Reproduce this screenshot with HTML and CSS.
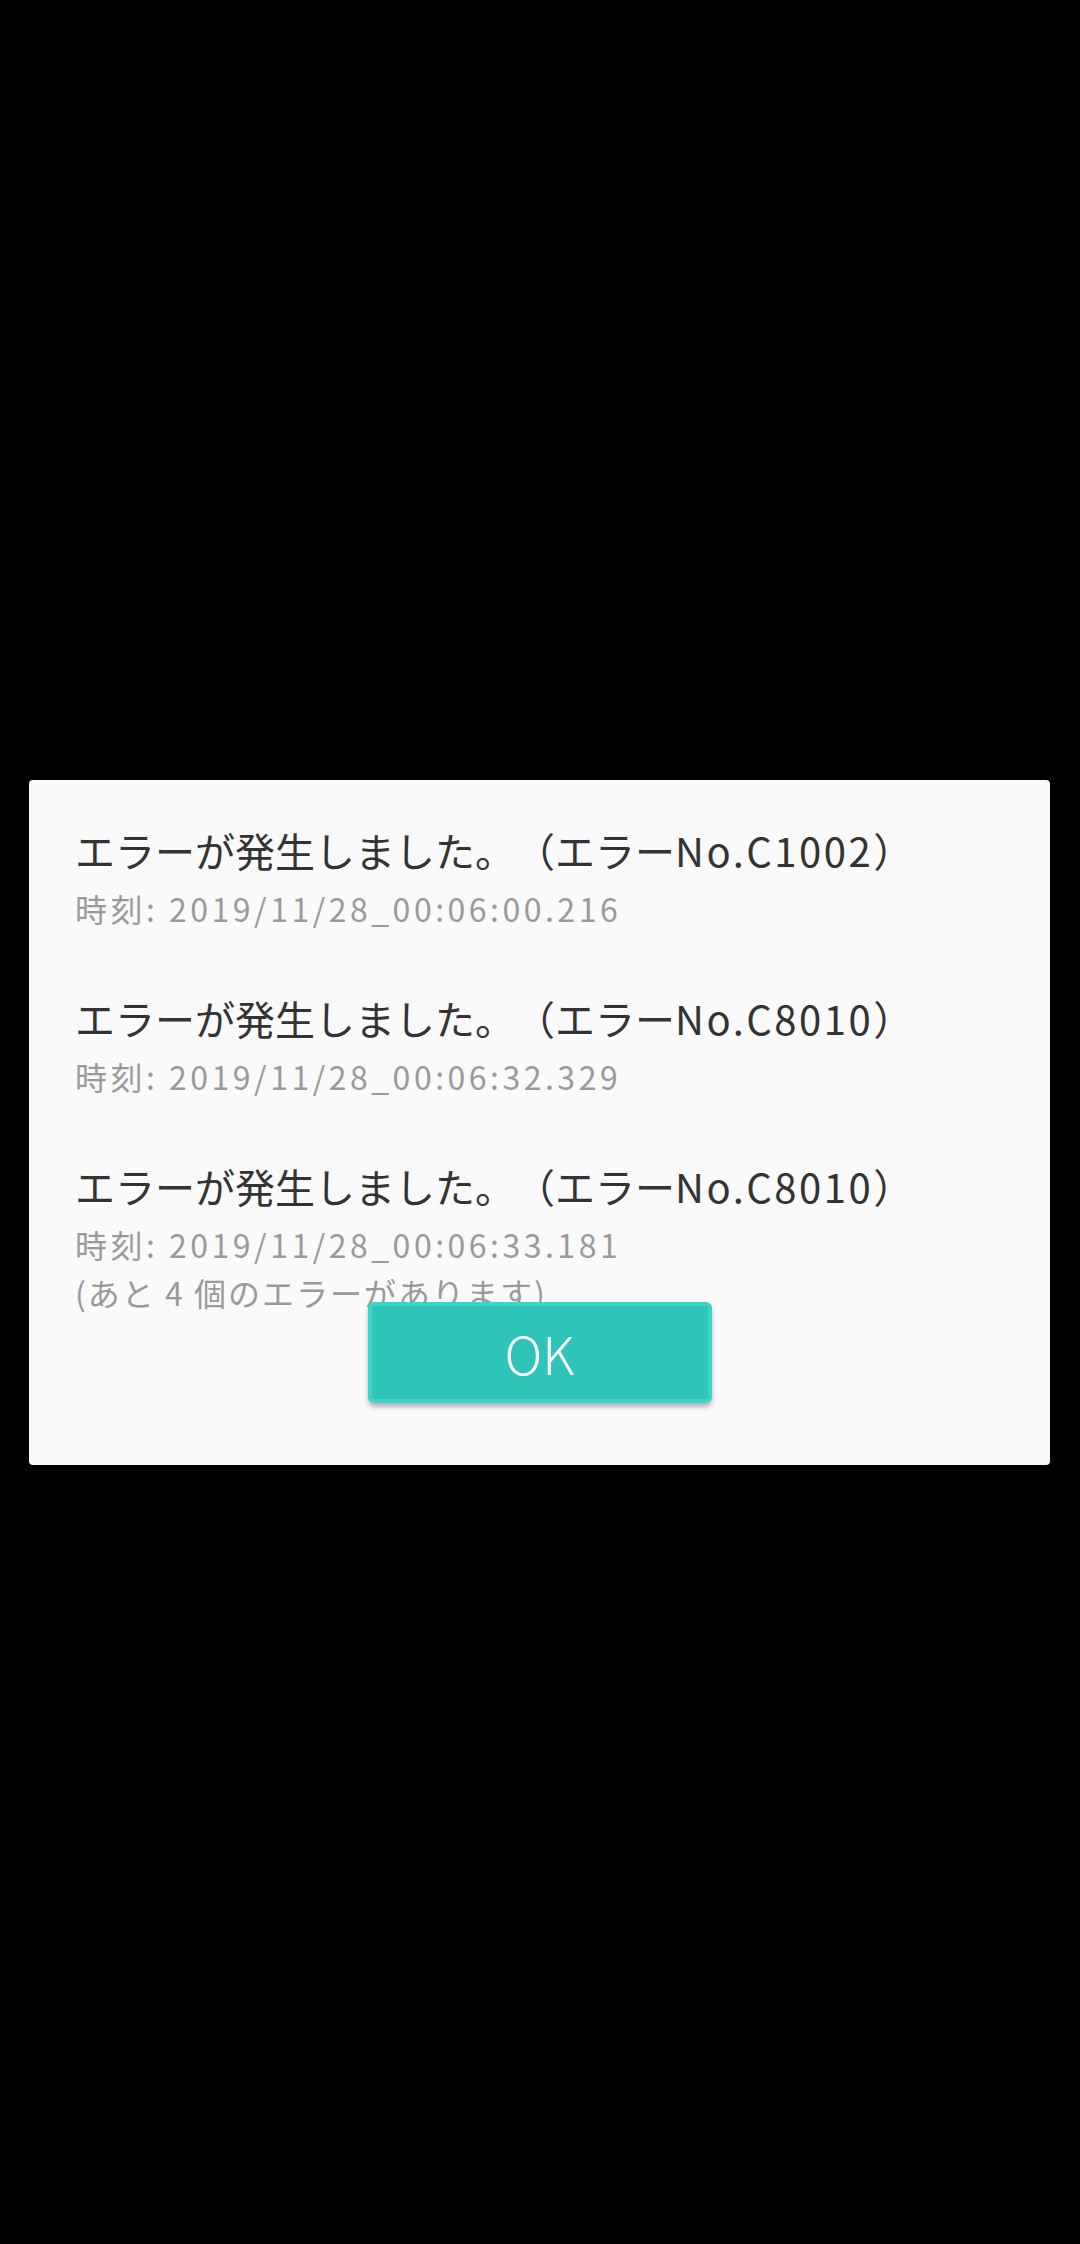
FILE: index.html
```html
<!DOCTYPE html>
<html lang="ja">
<head>
<meta charset="utf-8">
<link rel="stylesheet" href="styles.css">
</head>
<body>
<div class="screen">
  <div class="dialog">
    <div class="entry">
      <div class="title">エラーが発生しました。（エラー<span class="code">No.C1002</span>）</div>
      <div class="time">時刻: 2019/11/28_00:06:00.216</div>
    </div>
    <div class="entry">
      <div class="title">エラーが発生しました。（エラー<span class="code">No.C8010</span>）</div>
      <div class="time">時刻: 2019/11/28_00:06:32.329</div>
    </div>
    <div class="entry">
      <div class="title">エラーが発生しました。（エラー<span class="code">No.C8010</span>）</div>
      <div class="time">時刻: 2019/11/28_00:06:33.181</div>
      <div class="note">(あと 4 個のエラーがあります)</div>
    </div>
    <div class="actions">
      <button class="ok">OK</button>
    </div>
  </div>
</div>
</body>
</html>
```
FILE: styles.css
```css
html, body {
  margin: 0;
  padding: 0;
  background: #000;
}
body {
  width: 1080px;
  height: 2244px;
  font-family: "Noto Sans CJK JP", "Noto Sans", sans-serif;
  text-spacing-trim: space-all;
}
.screen {
  height: 2244px;
  display: flex;
  flex-direction: column;
  justify-content: flex-start;
  padding-top: 780px;
  box-sizing: border-box;
}
.dialog {
  margin-left: 29px;
  width: 1021px;
  background: #fafafa;
  border-radius: 4px;
  padding: 37px 0 62px 46px;
  box-sizing: border-box;
  display: flex;
  flex-direction: column;
  gap: 52px;
}
.entry {
  display: flex;
  flex-direction: column;
}
.title {
  font-size: 40px;
  line-height: 66px;
  color: #333333;
  white-space: nowrap;
  text-spacing-trim: space-all;
}
.code {
  letter-spacing: 2.5px;
}
.time, .note {
  font-size: 32px;
  line-height: 50px;
  color: #9a9a9a;
  letter-spacing: 3.5px;
  white-space: nowrap;
}
.note {
  line-height: 46px;
  letter-spacing: 2px;
}
.actions {
  display: flex;
  justify-content: center;
  margin-top: -65px;
  margin-left: -46px;
  position: relative;
}
.ok {
  width: 344px;
  height: 101px;
  background: #2ec4b7;
  border: 4px solid #3dd3c6;
  border-radius: 6px;
  box-shadow: 0 4px 5px rgba(0,0,0,0.28);
  color: #fff;
  font-family: "Noto Sans CJK JP", "Noto Sans", sans-serif;
  font-weight: 300;
  font-size: 52px;
  padding: 0;
}
```
